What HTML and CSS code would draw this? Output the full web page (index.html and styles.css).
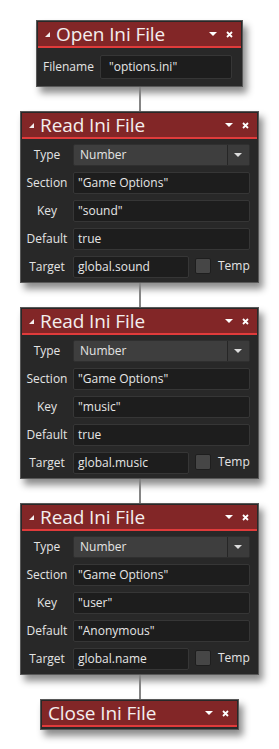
FILE: index.html
```html
<!DOCTYPE html>
<html>
<head>
<meta charset="utf-8">
<link rel="stylesheet" href="styles.css">
</head>
<body>
<div class="flow">
  <div class="node node-open">
    <div class="head">
      <span class="collapse"></span>
      <span class="title">Open Ini File</span>
      <span class="menu"></span>
      <svg class="close" viewBox="0 0 7 7"><path d="M1 1L6 6M6 1L1 6"/></svg>
    </div>
    <div class="body single">
      <span class="lbl">Filename</span>
      <span class="field wide">"options.ini"</span>
    </div>
  </div>
  <div class="wire"></div>

  <div class="node node-read">
    <div class="head">
      <span class="collapse"></span>
      <span class="title">Read Ini File</span>
      <span class="menu"></span>
      <svg class="close" viewBox="0 0 7 7"><path d="M1 1L6 6M6 1L1 6"/></svg>
    </div>
    <div class="body grid">
      <span class="lbl">Type</span>
      <div class="select"><span class="sel-text">Number</span><span class="sel-btn"><span class="sel-arrow"></span></span></div>
      <span class="lbl">Section</span>
      <span class="field">"Game Options"</span>
      <span class="lbl">Key</span>
      <span class="field">"sound"</span>
      <span class="lbl">Default</span>
      <span class="field">true</span>
      <span class="lbl">Target</span>
      <div class="target"><span class="field short">global.sound</span><span class="check"></span><span class="temp">Temp</span></div>
    </div>
  </div>
  <div class="wire"></div>

  <div class="node node-read">
    <div class="head">
      <span class="collapse"></span>
      <span class="title">Read Ini File</span>
      <span class="menu"></span>
      <svg class="close" viewBox="0 0 7 7"><path d="M1 1L6 6M6 1L1 6"/></svg>
    </div>
    <div class="body grid">
      <span class="lbl">Type</span>
      <div class="select"><span class="sel-text">Number</span><span class="sel-btn"><span class="sel-arrow"></span></span></div>
      <span class="lbl">Section</span>
      <span class="field">"Game Options"</span>
      <span class="lbl">Key</span>
      <span class="field">"music"</span>
      <span class="lbl">Default</span>
      <span class="field">true</span>
      <span class="lbl">Target</span>
      <div class="target"><span class="field short">global.music</span><span class="check"></span><span class="temp">Temp</span></div>
    </div>
  </div>
  <div class="wire"></div>

  <div class="node node-read">
    <div class="head">
      <span class="collapse"></span>
      <span class="title">Read Ini File</span>
      <span class="menu"></span>
      <svg class="close" viewBox="0 0 7 7"><path d="M1 1L6 6M6 1L1 6"/></svg>
    </div>
    <div class="body grid">
      <span class="lbl">Type</span>
      <div class="select"><span class="sel-text">Number</span><span class="sel-btn"><span class="sel-arrow"></span></span></div>
      <span class="lbl">Section</span>
      <span class="field">"Game Options"</span>
      <span class="lbl">Key</span>
      <span class="field">"user"</span>
      <span class="lbl">Default</span>
      <span class="field">"Anonymous"</span>
      <span class="lbl">Target</span>
      <div class="target"><span class="field short">global.name</span><span class="check"></span><span class="temp">Temp</span></div>
    </div>
  </div>
  <div class="wire"></div>

  <div class="node node-close">
    <div class="head">
      <span class="title">Close Ini File</span>
      <span class="menu"></span>
      <svg class="close" viewBox="0 0 7 7"><path d="M1 1L6 6M6 1L1 6"/></svg>
    </div>
  </div>
</div>
</body>
</html>
```

FILE: styles.css
```css
* { box-sizing: border-box; }
html, body { margin: 0; padding: 0; background: #ffffff; }
body {
  width: 279px;
  height: 749px;
  font-family: "Open Sans", "DejaVu Sans", sans-serif;
  color: #e4e4e4;
}
.flow {
  display: flex;
  flex-direction: column;
  align-items: center;
  padding-top: 20px;
}
.node {
  border: 1px solid #585858;
  padding: 1px;
  background: #282828;
  box-shadow: 4px 6px 7px rgba(0, 0, 0, 0.45);
}
.node-open { width: 207px; }
.node-read { width: 239px; }
.node-close { width: 199px; padding-bottom: 2px; }

.head {
  height: 26px;
  background: #822627;
  border-bottom: 2px solid #e03b3b;
  display: flex;
  align-items: center;
  padding: 0 8px 0 7px;
  color: #f3eeee;
}
.node-close .head { padding-left: 6px; }
.collapse {
  width: 0;
  height: 0;
  border-left: 5px solid transparent;
  border-bottom: 5px solid #f3eeee;
  margin-right: 6px;
  margin-top: 1px;
}
.title {
  font-size: 19px;
  line-height: 24px;
  flex: 1;
  white-space: nowrap;
  letter-spacing: -0.1px;
}
.menu {
  width: 0;
  height: 0;
  border-left: 4px solid transparent;
  border-right: 4px solid transparent;
  border-top: 4px solid #ffffff;
  margin-right: 9px;
}
.close {
  width: 7px;
  height: 7px;
  stroke: #ffffff;
  stroke-width: 1.8;
  fill: none;
  display: block;
}

.body { font-size: 12px; }
.single {
  display: flex;
  align-items: center;
  padding: 7px 9px 6px 5px;
  gap: 6px;
}
.grid {
  display: grid;
  grid-template-columns: 50px 1fr;
  column-gap: 1px;
  row-gap: 6px;
  padding: 5px 10px 3px 0;
}
.lbl {
  text-align: center;
  line-height: 22px;
  white-space: nowrap;
}
.single .lbl { text-align: left; }
.field {
  display: block;
  height: 22px;
  line-height: 20px;
  background: #1d1d1d;
  border: 1px solid #363636;
  border-radius: 2px;
  padding: 0 4px;
  white-space: nowrap;
  color: #e6e6e6;
}
.field.wide { flex: 1; height: 24px; line-height: 22px; padding-left: 8px; }
.select {
  display: flex;
  height: 22px;
  background: #3e3e3e;
  border: 1px solid #2f2f2f;
  border-radius: 2px;
  overflow: hidden;
}
.sel-text { flex: 1; line-height: 20px; padding-left: 6px; }
.sel-btn {
  width: 22px;
  border-left: 1px solid #262626;
  background: #3b3b3b;
  display: flex;
  align-items: center;
  justify-content: center;
}
.sel-arrow {
  width: 0;
  height: 0;
  border-left: 4px solid transparent;
  border-right: 4px solid transparent;
  border-top: 4px solid #dcdcdc;
}
.target {
  display: flex;
  align-items: center;
}
.field.short { width: 116px; }
.check {
  width: 16px;
  height: 16px;
  background: #464646;
  border: 1px solid #1e1e1e;
  border-radius: 2px;
  margin-left: 6px;
  margin-top: -2px;
}
.temp { margin-left: 7px; margin-top: -2px; line-height: 16px; font-size: 12px; }

.wire {
  width: 2px;
  height: 24px;
  background: #858585;
}
```
